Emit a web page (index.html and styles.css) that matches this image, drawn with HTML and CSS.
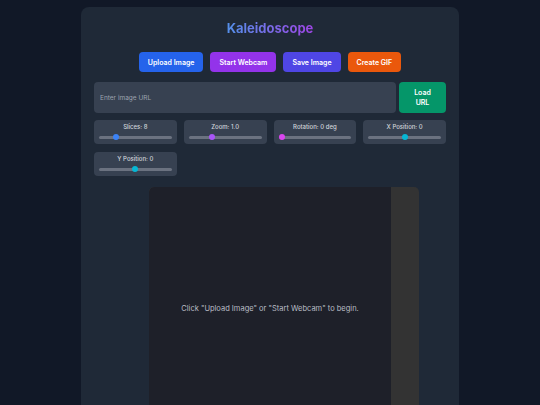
FILE: index.html
```html
<!DOCTYPE html>
<html lang="en">
<head>
<meta charset="utf-8">
<title>Kaleidoscope</title>
<link rel="stylesheet" href="styles.css">
</head>
<body>
<main class="app">
  <h1 class="title">Kaleidoscope</h1>
  <div class="actions">
    <button class="btn btn-blue">Upload Image</button>
    <button class="btn btn-purple">Start Webcam</button>
    <button class="btn btn-indigo">Save Image</button>
    <button class="btn btn-orange">Create GIF</button>
  </div>
  <div class="url-row">
    <input class="url-input" type="text" placeholder="Enter image URL">
    <button class="btn btn-green load-btn">Load<br>URL</button>
  </div>
  <div class="controls">
    <label class="control">
      <span class="control-label">Slices: 8</span>
      <input class="range thumb-blue" type="range" min="2" max="30" value="8">
    </label>
    <label class="control">
      <span class="control-label">Zoom: 1.0</span>
      <input class="range thumb-purple" type="range" min="0.1" max="3" step="0.1" value="1">
    </label>
    <label class="control">
      <span class="control-label">Rotation: 0 deg</span>
      <input class="range thumb-fuchsia" type="range" min="0" max="360" value="0">
    </label>
    <label class="control">
      <span class="control-label">X Position: 0</span>
      <input class="range thumb-cyan" type="range" min="-100" max="100" value="0">
    </label>
    <label class="control">
      <span class="control-label">Y Position: 0</span>
      <input class="range thumb-cyan" type="range" min="-100" max="100" value="0">
    </label>
  </div>
  <div class="stage">
    <div class="canvas">
      <p class="hint">Click "Upload Image" or "Start Webcam" to begin.</p>
    </div>
  </div>
</main>
</body>
</html>
```

FILE: styles.css
```css
* { box-sizing: border-box; }

html, body {
  margin: 0;
  height: 100%;
  overflow: hidden;
}

body {
  background: #111827;
  font-family: Inter, "Noto Sans", "Liberation Sans", sans-serif;
  color: #e5e7eb;
}

.app {
  width: 378px;
  margin: 7px auto 0;
  padding: 13px 13px 0;
  background: #1f2937;
  border-radius: 8px 8px 0 0;
}

.title {
  margin: 0 auto;
  font-size: 13px;
  line-height: 16px;
  font-weight: 700;
  text-align: center;
  background: linear-gradient(90deg, #5490ea, #9d45e4);
  -webkit-background-clip: text;
  background-clip: text;
  color: transparent;
  width: max-content;
}

.actions {
  margin-top: 16px;
  display: flex;
  justify-content: center;
  gap: 7px;
}

.btn {
  border: 0;
  border-radius: 4px;
  color: #fff;
  font-family: inherit;
  font-size: 7px;
  font-weight: 600;
  height: 20px;
  padding: 0 9px;
  cursor: pointer;
}

.btn-blue { background: #2563eb; }
.btn-purple { background: #9333ea; }
.btn-indigo { background: #4f46e5; }
.btn-orange { background: #ea580c; }
.btn-green { background: #059669; }

.url-row {
  margin-top: 10px;
  display: flex;
  gap: 3px;
}

.url-input {
  flex: 1;
  height: 31px;
  border: 0;
  border-radius: 4px;
  background: #374151;
  color: #e5e7eb;
  font-family: inherit;
  font-size: 6.5px;
  padding: 0 6px;
  outline: none;
}

.url-input::placeholder { color: #9ca3af; }

.load-btn {
  width: 47px;
  height: 31px;
  padding: 0;
  line-height: 10px;
}

.controls {
  margin-top: 7px;
  display: grid;
  grid-template-columns: repeat(4, 1fr);
  column-gap: 7px;
  row-gap: 8px;
}

.control {
  height: 24px;
  background: #374151;
  border-radius: 4px;
  padding: 3px 5px 0;
  display: flex;
  flex-direction: column;
  align-items: stretch;
}

.control-label {
  font-size: 6px;
  line-height: 8px;
  font-weight: 500;
  color: #d1d5db;
  text-align: center;
}

.range {
  -webkit-appearance: none;
  appearance: none;
  width: 100%;
  height: 6px;
  margin: 3px 0 0;
  background: transparent;
}

.range::-webkit-slider-runnable-track {
  height: 3px;
  background: #6b7280;
  border-radius: 2px;
}

.range::-webkit-slider-thumb {
  -webkit-appearance: none;
  appearance: none;
  width: 6px;
  height: 6px;
  border-radius: 50%;
  margin-top: -1.5px;
  border: 0;
}

.thumb-blue::-webkit-slider-thumb { background: #3b82f6; }
.thumb-purple::-webkit-slider-thumb { background: #a855f7; }
.thumb-fuchsia::-webkit-slider-thumb { background: #d946ef; }
.thumb-cyan::-webkit-slider-thumb { background: #06b6d4; }

.stage {
  margin-top: 11px;
  margin-left: 55px;
  width: 270px;
  height: 218px;
  overflow: hidden;
  background: #333333;
  border-radius: 5px 5px 0 0;
}

.canvas {
  width: 242px;
  height: 242px;
  background: #1e2029;
  border-radius: 5px 0 0 0;
  display: flex;
  align-items: center;
  justify-content: center;
}

.hint {
  margin: 0;
  font-size: 7.5px;
  color: #b9bdc5;
}
```
